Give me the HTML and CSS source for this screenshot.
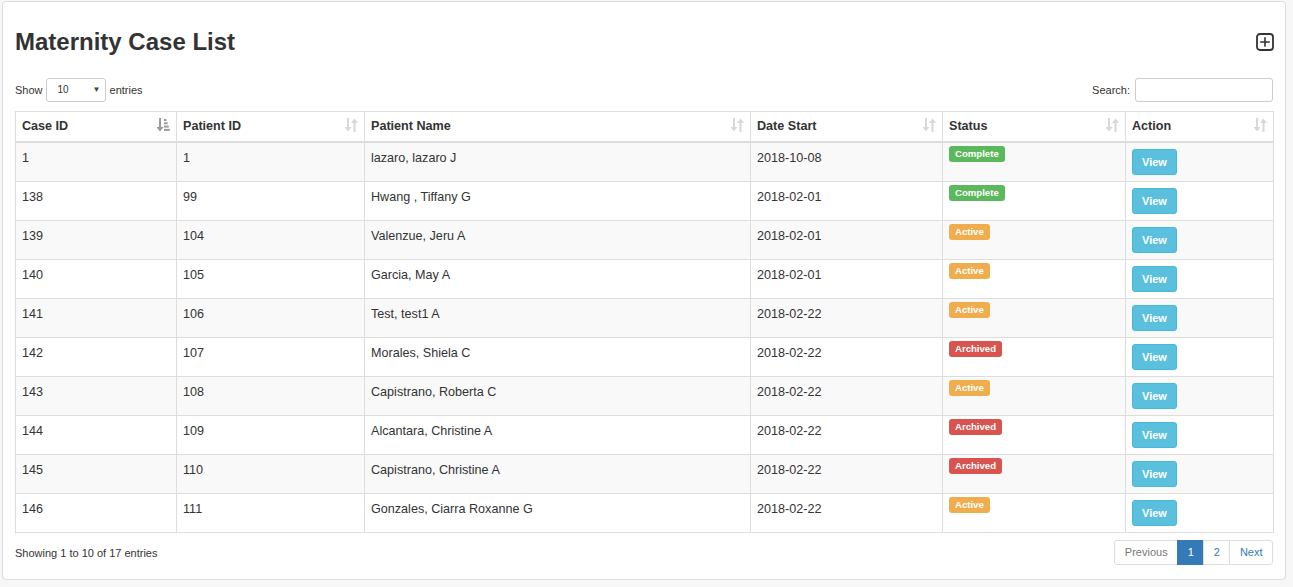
FILE: index.html
```html
<!DOCTYPE html>
<html>
<head>
<meta charset="utf-8">
<link rel="stylesheet" href="styles.css">
</head>
<body>
<div class="card">
  <div class="card-head">
    <h2 class="title">Maternity Case List</h2>
    <a class="add-btn" href="#" aria-label="Add">
      <svg width="18" height="18" viewBox="0 0 18 18"><rect x="1" y="1" width="16" height="16" rx="3" fill="none" stroke="#333" stroke-width="1.8"/><path d="M9 4.2V13.8M4.2 9H13.8" stroke="#333" stroke-width="1.6"/></svg>
    </a>
  </div>
  <div class="controls">
    <label class="length">Show <span class="select-wrap"><span class="select-val">10</span><span class="caret">&#9660;</span></span> entries</label>
    <label class="search">Search: <input type="text" class="search-input"></label>
  </div>
  <table class="grid">
    <colgroup>
      <col class="c1"><col class="c2"><col class="c3"><col class="c4"><col class="c5"><col class="c6">
    </colgroup>
    <thead>
      <tr>
        <th>Case ID<svg class="sort on" width="13" height="14" viewBox="0 0 13 14"><path d="M2 0h2v9h2.5L3 13.5 -0.5 9H2z"/><rect x="7" y="1" width="2.5" height="2"/><rect x="7" y="4.3" width="3.6" height="2"/><rect x="7" y="7.6" width="4.7" height="2"/><rect x="7" y="10.9" width="5.8" height="2"/></svg></th>
        <th>Patient ID<svg class="sort" width="13" height="14" viewBox="0 0 13 14"><path d="M2 0h2v9h2.5L3 13.5 -0.5 9H2z"/><path d="M8.5 14h2V5h2.5L9.5 0.5 6 5h2.5z"/></svg></th>
        <th>Patient Name<svg class="sort" width="13" height="14" viewBox="0 0 13 14"><path d="M2 0h2v9h2.5L3 13.5 -0.5 9H2z"/><path d="M8.5 14h2V5h2.5L9.5 0.5 6 5h2.5z"/></svg></th>
        <th>Date Start<svg class="sort" width="13" height="14" viewBox="0 0 13 14"><path d="M2 0h2v9h2.5L3 13.5 -0.5 9H2z"/><path d="M8.5 14h2V5h2.5L9.5 0.5 6 5h2.5z"/></svg></th>
        <th>Status<svg class="sort" width="13" height="14" viewBox="0 0 13 14"><path d="M2 0h2v9h2.5L3 13.5 -0.5 9H2z"/><path d="M8.5 14h2V5h2.5L9.5 0.5 6 5h2.5z"/></svg></th>
        <th>Action<svg class="sort" width="13" height="14" viewBox="0 0 13 14"><path d="M2 0h2v9h2.5L3 13.5 -0.5 9H2z"/><path d="M8.5 14h2V5h2.5L9.5 0.5 6 5h2.5z"/></svg></th>
      </tr>
    </thead>
    <tbody>
      <tr><td>1</td><td>1</td><td>lazaro, lazaro J</td><td>2018-10-08</td><td><span class="label complete">Complete</span></td><td><a class="view-btn" href="#">View</a></td></tr>
      <tr><td>138</td><td>99</td><td>Hwang , Tiffany G</td><td>2018-02-01</td><td><span class="label complete">Complete</span></td><td><a class="view-btn" href="#">View</a></td></tr>
      <tr><td>139</td><td>104</td><td>Valenzue, Jeru A</td><td>2018-02-01</td><td><span class="label active">Active</span></td><td><a class="view-btn" href="#">View</a></td></tr>
      <tr><td>140</td><td>105</td><td>Garcia, May A</td><td>2018-02-01</td><td><span class="label active">Active</span></td><td><a class="view-btn" href="#">View</a></td></tr>
      <tr><td>141</td><td>106</td><td>Test, test1 A</td><td>2018-02-22</td><td><span class="label active">Active</span></td><td><a class="view-btn" href="#">View</a></td></tr>
      <tr><td>142</td><td>107</td><td>Morales, Shiela C</td><td>2018-02-22</td><td><span class="label archived">Archived</span></td><td><a class="view-btn" href="#">View</a></td></tr>
      <tr><td>143</td><td>108</td><td>Capistrano, Roberta C</td><td>2018-02-22</td><td><span class="label active">Active</span></td><td><a class="view-btn" href="#">View</a></td></tr>
      <tr><td>144</td><td>109</td><td>Alcantara, Christine A</td><td>2018-02-22</td><td><span class="label archived">Archived</span></td><td><a class="view-btn" href="#">View</a></td></tr>
      <tr><td>145</td><td>110</td><td>Capistrano, Christine A</td><td>2018-02-22</td><td><span class="label archived">Archived</span></td><td><a class="view-btn" href="#">View</a></td></tr>
      <tr><td>146</td><td>111</td><td>Gonzales, Ciarra Roxanne G</td><td>2018-02-22</td><td><span class="label active">Active</span></td><td><a class="view-btn" href="#">View</a></td></tr>
    </tbody>
  </table>
  <div class="footer">
    <div class="info">Showing 1 to 10 of 17 entries</div>
    <ul class="pager">
      <li class="disabled"><a href="#">Previous</a></li>
      <li class="current"><a href="#">1</a></li>
      <li><a href="#">2</a></li>
      <li><a href="#">Next</a></li>
    </ul>
  </div>
</div>
</body>
</html>
```
FILE: styles.css
```css
html, body {
  margin: 0;
  padding: 0;
}
body {
  background: #f7f7f7;
  font-family: "Liberation Sans", Arial, sans-serif;
  color: #333;
  font-size: 12.6px;
  line-height: 18px;
}
.card {
  margin: 1px 7px 0 2px;
  background: #fff;
  border: 1px solid #ddd;
  border-radius: 4px;
  padding: 15px 12px 14px;
  box-shadow: 0 1px 1px rgba(0,0,0,0.04);
}
.card-head {
  display: flex;
  align-items: center;
  justify-content: space-between;
  margin-top: 12px;
}
.title {
  margin: 0;
  font-size: 24px;
  line-height: 26px;
  font-weight: bold;
  color: #333;
}
.add-btn {
  display: flex;
  width: 18px;
  height: 18px;
  margin-right: -1px;
}
.controls {
  display: flex;
  justify-content: space-between;
  align-items: center;
  margin-top: 23px;
  font-size: 11px;
}
.length, .search {
  display: flex;
  align-items: center;
}
.select-wrap {
  position: relative;
  display: inline-block;
  box-sizing: border-box;
  width: 60px;
  height: 24px;
  border: 1px solid #ccc;
  border-radius: 3px;
  margin: 0 4px 0 3px;
  background: #fff;
}
.select-val {
  position: absolute;
  left: 11px;
  top: 4px;
  font-size: 10px;
  line-height: 14px;
  color: #333;
}
.caret {
  position: absolute;
  right: 4px;
  top: 5px;
  font-size: 8px;
  line-height: 12px;
  color: #444;
}
.search-input {
  box-sizing: border-box;
  width: 138px;
  height: 24px;
  margin: 0 0 0 5px;
  border: 1px solid #ccc;
  border-radius: 3px;
  padding: 2px 5px;
  font: inherit;
}
.grid {
  width: 100%;
  margin-top: 9px;
  border-collapse: collapse;
  table-layout: fixed;
  border: 1px solid #ddd;
}
.c1 { width: 161px; }
.c2 { width: 188px; }
.c3 { width: 386px; }
.c4 { width: 192px; }
.c5 { width: 183px; }
.c6 { width: 148px; }
.grid th {
  position: relative;
  text-align: left;
  font-weight: bold;
  padding: 5px 24px 6px 6px;
  border: 1px solid #ddd;
  border-bottom: 2px solid #ddd;
  white-space: nowrap;
}
.sort {
  position: absolute;
  right: 6px;
  top: 6px;
  fill: #d8d8d8;
}
.sort.on {
  fill: #9a9a9a;
}
.grid td {
  padding: 6px 6px;
  height: 26px;
  vertical-align: top;
  border: 1px solid #ddd;
}
.grid tbody tr:nth-child(odd) td {
  background: #f9f9f9;
}
.label {
  display: inline-block;
  margin-top: -3px;
  vertical-align: top;
  font-size: 9.6px;
  font-weight: bold;
  line-height: 1;
  color: #fff;
  padding: 3px 6px 3px;
  border-radius: 3px;
}
.complete { background: #5cb85c; }
.active { background: #f0ad4e; }
.archived { background: #d9534f; }
.view-btn {
  display: inline-block;
  box-sizing: border-box;
  height: 26px;
  width: 45px;
  line-height: 24px;
  text-align: center;
  font-size: 11px;
  font-weight: bold;
  color: #fff;
  text-decoration: none;
  background: #5bc0de;
  border: 1px solid #46b8da;
  border-radius: 3px;
}
.footer {
  display: flex;
  justify-content: space-between;
  align-items: center;
  margin-top: 7px;
  font-size: 11px;
}
.info {
  line-height: 14px;
}
.pager {
  display: flex;
  list-style: none;
  margin: 0;
  padding: 0;
}
.pager a {
  display: block;
  height: 25px;
  box-sizing: border-box;
  line-height: 23px;
  padding: 0 9.5px;
  border: 1px solid #ddd;
  margin-left: -1px;
  color: #337ab7;
  text-decoration: none;
  background: #fff;
  font-size: 11px;
}
.pager li:first-child a {
  border-radius: 3px 0 0 3px;
  margin-left: 0;
}
.pager li:last-child a {
  border-radius: 0 3px 3px 0;
}
.pager .disabled a {
  color: #777;
}
.pager .current a {
  background: #337ab7;
  border-color: #337ab7;
  color: #fff;
}
```
